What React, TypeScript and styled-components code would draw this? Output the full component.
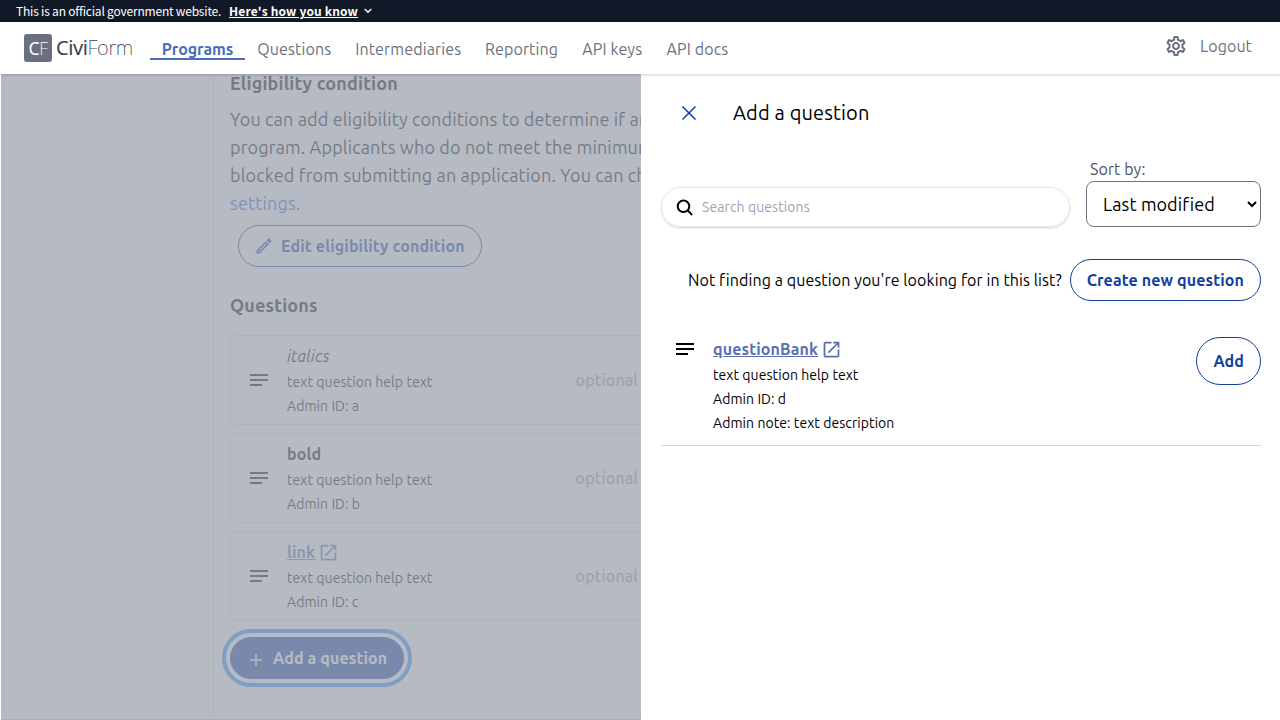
import React from "react";
import styled, { createGlobalStyle } from "styled-components";
import { MdAdd, MdNotes, MdOpenInNew, MdOutlineEdit, MdOutlineSettings } from "react-icons/md";

const GlobalStyle = createGlobalStyle`
  *, *::before, *::after { box-sizing: border-box; }
  body {
    margin: 0;
    color: #000;
    background: #fff;
    font-family: Ubuntu, "Noto Sans", "Open Sans", sans-serif;
    font-size: 16px;
    line-height: 24px;
    letter-spacing: 0.0055em;
    overflow: hidden;
  }
  svg { display: block; flex: none; }
  h2, h3, p { margin: 0; }
  button, select, input { font: inherit; letter-spacing: inherit; }
`;

const Page = styled.div`
  display: flex;
  flex-direction: column;
  height: 720px;
  overflow: hidden;
`;

const Banner = styled.div`
  flex: none;
  display: flex;
  align-items: center;
  height: 22px;
  padding-left: 16px;
  background: #111827;
  color: #fff;
  font-family: "Noto Sans CJK SC", "Noto Sans", sans-serif;
  font-size: 12px;
  line-height: 22px;
  letter-spacing: -0.2px;
`;

const BannerLink = styled.span`
  margin: 0 6px 0 8px;
  font-weight: 700;
  letter-spacing: 0.16px;
  text-decoration: underline;
`;

const Header = styled.header`
  position: relative;
  z-index: 2;
  flex: none;
  display: flex;
  align-items: flex-start;
  height: 52px;
  padding: 0 28px 0 24px;
  background: #fff;
  box-shadow: 0 1px 3px rgba(0, 0, 0, 0.12), 0 1px 2px rgba(0, 0, 0, 0.06);
  color: #6b7280;
`;

const Logo = styled.div`
  display: flex;
  align-items: center;
  width: 126px;
  height: 28px;
  margin-top: 12px;
  font-family: "Noto Sans", sans-serif;
`;

const LogoBadge = styled.div`
  display: flex;
  align-items: center;
  justify-content: center;
  width: 28px;
  height: 28px;
  margin-right: 4px;
  border-radius: 3px;
  background: #6b7080;
  color: #fff;
  font-size: 17.5px;
  letter-spacing: -0.5px;
`;

const Thin = styled.span`
  font-weight: 200;
`;

const FormWord = styled(Thin)`
  letter-spacing: -0.35px;
`;

const LogoName = styled.div`
  color: #374151;
  font-size: 20px;
  letter-spacing: -0.4px;
  white-space: nowrap;
`;

const Nav = styled.nav`
  display: flex;
  margin-top: 14px;
`;

const NavItem = styled.a<{ $active?: boolean; $width: number }>`
  display: flex;
  justify-content: center;
  width: ${(p) => p.$width}px;
  height: 24px;
  line-height: 26px;
  white-space: nowrap;
  border-bottom: 2px solid ${(p) => (p.$active ? "#4a6eba" : "transparent")};
  color: ${(p) => (p.$active ? "#4a6eba" : "inherit")};
  font-weight: ${(p) => (p.$active ? 700 : 400)};
  letter-spacing: ${(p) => (p.$active ? "-0.1px" : "0.0078em")};
`;

const Account = styled.div`
  display: flex;
  align-items: center;
  gap: 12px;
  height: 48px;
  margin-left: auto;
`;

const Body = styled.div`
  position: relative;
  flex: 1;
  display: flex;
  min-height: 0;
`;

const Main = styled.main`
  width: 641px;
  padding-left: 213px;
  overflow: hidden;
`;

const Block = styled.section`
  width: 800px;
  height: 660px;
  margin-top: -5px;
  padding: 0 16px;
  border-left: 1px solid #e1e4f0;
`;

const Heading = styled.h3`
  font-size: 18px;
  line-height: 28px;
  font-weight: 700;
  letter-spacing: 0.009em;
`;

const Copy = styled.p`
  margin-top: 8px;
  font-size: 18px;
  line-height: 28px;
  letter-spacing: 0.0078em;
  white-space: nowrap;
`;

const CopyLink = styled.a`
  color: #2563eb;
`;

const Pill = styled.button<{ $solid?: boolean; $tall?: boolean }>`
  display: inline-flex;
  align-items: center;
  justify-content: center;
  height: ${(p) => (p.$tall ? 48 : 42)}px;
  padding: 0 16px;
  border: 1px solid #113f9f;
  border-radius: 24px;
  background: ${(p) => (p.$solid ? "#113f9f" : "transparent")};
  color: ${(p) => (p.$solid ? "#fff" : "#113f9f")};
  font-weight: 700;
  line-height: 24px;
  letter-spacing: 0.007em;
  white-space: nowrap;
`;

const EditButton = styled(Pill)`
  display: flex;
  justify-content: flex-start;
  padding-left: 15px;
  width: 244px;
  margin: 8px 0 0 8px;
  gap: 7px;
  letter-spacing: 0.009em;
`;

const AddQuestionButton = styled(Pill)`
  display: flex;
  justify-content: flex-start;
  padding-left: 15px;
  width: 174px;
  margin-top: 16px;
  gap: 7px;
  outline: 4px solid #2491ff;
  outline-offset: 4px;
  & > svg { margin-top: 3px; }
`;

const QuestionsHeading = styled(Heading)`
  margin: 24px 0 16px;
`;

const Card = styled.article`
  display: flex;
  align-items: center;
  height: 90px;
  margin-top: 8px;
  padding: 0 16px;
  border: 1px solid #e0e3ee;
  border-radius: 6px;
`;

const Details = styled.div`
  width: 288.5px;
  margin-left: 16px;
  padding-top: 2px;
`;

const Small = styled.div`
  font-size: 14px;
  line-height: 24px;
  letter-spacing: 0.005em;
`;

const Title = styled.div<{ $kind?: string }>`
  display: flex;
  align-items: center;
  gap: 3px;
  height: 24px;
  margin-bottom: 2px;
  color: ${(p) => (p.$kind === "link" ? "#5b70b2" : "inherit")};
  font-style: ${(p) => (p.$kind === "italic" ? "italic" : "normal")};
  font-weight: ${(p) => (p.$kind === "italic" ? 400 : 700)};
  letter-spacing: 0.0075em;

  & > span { text-decoration: ${(p) => (p.$kind === "link" ? "underline" : "none")}; }
`;

const Optional = styled.div`
  color: #9ca3af;
  font-weight: 500;
  letter-spacing: 0.01em;
`;

const Scrim = styled.div`
  position: absolute;
  inset: 0 0 0 1px;
  background: rgba(156, 163, 175, 0.75);
  border-bottom: 1px solid #a9adb6;
`;

const Drawer = styled.aside`
  position: relative;
  z-index: 1;
  width: 639px;
  padding: 23px 19px 0 20px;
  background: #fff;
`;

const DrawerHeader = styled.div`
  display: flex;
  align-items: center;
  gap: 36px;
  height: 32px;
  padding-left: 20px;
`;

const DrawerTitle = styled.h2`
  font-size: 20px;
  font-weight: 400;
  letter-spacing: 0.007em;
`;

const Filters = styled.div`
  display: flex;
  align-items: flex-end;
  justify-content: space-between;
  margin-top: 28px;
`;

const Search = styled.label`
  display: flex;
  align-items: center;
  gap: 9px;
  width: 409px;
  height: 40px;
  padding-left: 14px;
  border: 1px solid #e5e7eb;
  border-radius: 20px;
  box-shadow: 0 1px 3px rgba(0, 0, 0, 0.12), 0 1px 2px rgba(0, 0, 0, 0.06);
`;

const SearchInput = styled.input`
  width: 300px;
  padding: 0;
  border: 0;
  background: transparent;
  font-size: 14px;
  &::placeholder { color: #9ca3af; }
`;

const SortLabel = styled.label`
  display: block;
  padding-left: 4px;
  color: #4b5563;
`;

const Select = styled.select`
  display: block;
  width: 175px;
  height: 46px;
  padding: 0 0 0 12px;
  border: 1px solid #6b7280;
  border-radius: 8px;
  background: #fff;
  color: #000;
  font-size: 18px;
`;

const CreateRow = styled.div`
  display: flex;
  align-items: center;
  justify-content: flex-end;
  gap: 8px;
  margin-top: 32px;
`;

const BankItem = styled.article`
  display: flex;
  align-items: flex-start;
  height: 121px;
  margin-top: 24px;
  padding: 12px 0 0 12px;
  border-bottom: 1px solid #d1d5db;
`;

const BankDetails = styled.div`
  flex: 1;
  margin-left: 16px;
`;

const questions = [
  { title: "italics", kind: "italic", id: "a" },
  { title: "bold", kind: "bold", id: "b" },
  { title: "link", kind: "link", id: "c" },
];

const navItems: [string, number][] = [
  ["Programs", 95],
  ["Questions", 98.5],
  ["Intermediaries", 129.5],
  ["Reporting", 97],
  ["API keys", 84.5],
  ["API docs", 86],
];

const QuestionTitle = ({ title, kind }: { title: string; kind: string }) => (
  <Title $kind={kind}>
    <span>{title}</span>
    {kind === "link" && <MdOpenInNew size={21} />}
  </Title>
);

export default function App() {
  return (
    <Page>
      <GlobalStyle />
      <Banner>
        This is an official government website.
        <BannerLink>Here's how you know</BannerLink>
        <svg width="8" height="6" viewBox="0 0 8 6" fill="none" stroke="#fff" strokeWidth="1.3">
          <path d="M0.7 1 4 4.3 7.3 1" />
        </svg>
      </Banner>
      <Header>
        <Logo>
          <LogoBadge>
            C<Thin>F</Thin>
          </LogoBadge>
          <LogoName>
            Civi<FormWord>Form</FormWord>
          </LogoName>
        </Logo>
        <Nav>
          {navItems.map(([label, width], i) => (
            <NavItem key={label} $width={width} $active={i === 0}>
              {label}
            </NavItem>
          ))}
        </Nav>
        <Account>
          <MdOutlineSettings size={24} />
          Logout
        </Account>
      </Header>
      <Body>
        <Main>
          <Block>
            <Heading>Eligibility condition</Heading>
            <Copy>
              You can add eligibility conditions to determine if an applicant
              <br />
              program. Applicants who do not meet the minimum requirements
              <br />
              blocked from submitting an application. You can change
              <br />
              <CopyLink>settings.</CopyLink>
            </Copy>
            <EditButton>
              <MdOutlineEdit size={20} />
              Edit eligibility condition
            </EditButton>
            <QuestionsHeading>Questions</QuestionsHeading>
            {questions.map((q) => (
              <Card key={q.id}>
                <MdNotes size={24} />
                <Details>
                  <QuestionTitle title={q.title} kind={q.kind} />
                  <Small>text question help text</Small>
                  <Small>Admin ID: {q.id}</Small>
                </Details>
                <Optional>optional</Optional>
              </Card>
            ))}
            <AddQuestionButton $solid>
              <MdAdd size={20} />
              Add a question
            </AddQuestionButton>
          </Block>
        </Main>
        <Scrim />
        <Drawer>
          <DrawerHeader>
            <svg width="16" height="16" viewBox="0 0 16 16" fill="none" stroke="#113f9f" strokeWidth="1.5">
              <path d="M1.5 1.5l13 13M14.5 1.5l-13 13" />
            </svg>
            <DrawerTitle>Add a question</DrawerTitle>
          </DrawerHeader>
          <Filters>
            <Search>
              <svg width="17" height="17" viewBox="0 0 17 17" fill="none" stroke="#000" strokeWidth="2">
                <circle cx="7.5" cy="7.3" r="5.8" />
                <path d="M11.6 11.4l4.6 4.6" />
              </svg>
              <SearchInput placeholder="Search questions" />
            </Search>
            <div>
              <SortLabel>Sort by:</SortLabel>
              <Select defaultValue="modified">
                <option value="modified">Last modified</option>
              </Select>
            </div>
          </Filters>
          <CreateRow>
            Not finding a question you're looking for in this list?
            <Pill>Create new question</Pill>
          </CreateRow>
          <BankItem>
            <MdNotes size={24} />
            <BankDetails>
              <QuestionTitle title="questionBank" kind="link" />
              <Small>text question help text</Small>
              <Small>Admin ID: d</Small>
              <Small>Admin note: text description</Small>
            </BankDetails>
            <Pill $tall>Add</Pill>
          </BankItem>
        </Drawer>
      </Body>
    </Page>
  );
}
